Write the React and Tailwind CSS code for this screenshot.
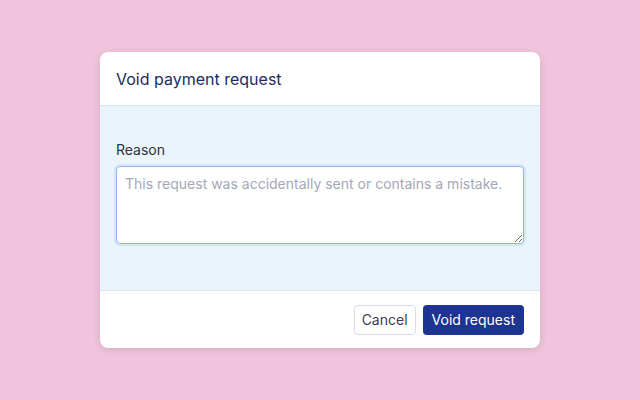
import React from 'react';

const App = () => {
  return (
    <div
      className="w-[640px] h-[400px] bg-[#f1c4de] flex items-center justify-center"
      style={{ fontFamily: 'Inter, "Noto Sans", sans-serif' }}
    >
      <div className="w-[440px] bg-white rounded-lg shadow-[0_2px_8px_rgba(0,0,0,0.12)] overflow-hidden">
        <div className="h-[54px] px-4 flex items-center border-b border-[#dbe9f5]">
          <h2 className="text-[16px] text-[#1c2b5e]">Void payment request</h2>
        </div>

        <div className="bg-[#ebf3fb] px-4 pt-[34px] pb-[46px] border-b border-[#d6e6f4]">
          <label className="block text-[14px] leading-5 text-[#2d3344] mb-[6px]">Reason</label>
          <textarea
            className="block w-full h-[78px] rounded-[4px] bg-white border border-[#8fb6f0] shadow-[0_0_0_2px_#d7e6fa] px-2 py-[6px] text-[14px] text-[#333] placeholder:text-[#a3a8b6] outline-none"
            placeholder="This request was accidentally sent or contains a mistake."
          />
        </div>

        <div className="h-[57px] px-4 flex items-center justify-end gap-[7px]">
          <button className="h-[30px] px-[7px] rounded-[4px] border border-[#d4dde8] bg-white text-[14px] text-[#3b4150]">
            Cancel
          </button>
          <button className="h-[30px] px-[9px] rounded-[4px] bg-[#1d3493] text-[14px] text-white">
            Void request
          </button>
        </div>
      </div>
    </div>
  );
};

export default App;
